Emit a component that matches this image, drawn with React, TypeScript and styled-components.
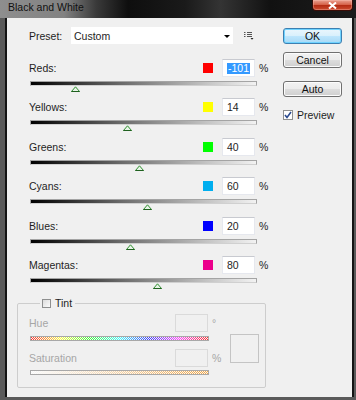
import styled, { createGlobalStyle } from 'styled-components'

const GlobalStyle = createGlobalStyle`
  html, body {
    margin: 0;
    padding: 0;
    background: #000;
  }
  body {
    font-family: "Liberation Sans", Arial, sans-serif;
    font-size: 10.5px;
    color: #1e1e1e;
  }
`

type Channel = {
  name: string
  color: string
  value: number
  selected?: boolean
}

const channels: Channel[] = [
  { name: 'Reds', color: '#ff0000', value: -101, selected: true },
  { name: 'Yellows', color: '#ffff00', value: 14 },
  { name: 'Greens', color: '#00ff00', value: 40 },
  { name: 'Cyans', color: '#00aeef', value: 60 },
  { name: 'Blues', color: '#0000ff', value: 20 },
  { name: 'Magentas', color: '#ec008c', value: 80 },
]

// photoshop sliders run from -200 to 300
const toPercent = (v: number) => ((v + 200) / 500) * 100

const ThumbIcon = () => (
  <svg width="9" height="6" viewBox="0 0 9 6">
    <path d="M0.5 5.5 L4.5 0.8 L8.5 5.5 Z" fill="#e8f4e8" stroke="#2f8f2f" strokeWidth="1" />
    <path d="M0.5 5.5 H8.5" stroke="#1f5f1f" strokeWidth="1" />
  </svg>
)

const App = () => {
  return (
    <>
      <GlobalStyle />
      <Window>
        <TitleBar>
          <Title>Black and White</Title>
          <CloseButton>
            <svg width="9" height="7" viewBox="0 0 9 7">
              <path d="M1 0.5 L8 6.5 M8 0.5 L1 6.5" stroke="#fff" strokeWidth="2" />
            </svg>
          </CloseButton>
        </TitleBar>
        <Body>
          <Main>
            <PresetRow>
              <PresetLabel>Preset:</PresetLabel>
              <Select>
                <span>Custom</span>
                <Caret />
              </Select>
              <MenuIcon width="10" height="9" viewBox="0 0 10 9">
                <path d="M0 1.5 H1.5 M3 1.5 H8 M0 3.5 H1.5 M3 3.5 H8 M0 5.5 H1.5 M3 5.5 H8" stroke="#555" strokeWidth="1" />
                <path d="M6.5 7 L9.5 7 L8 8.8 Z" fill="#222" />
              </MenuIcon>
            </PresetRow>

            <ChannelList>
              {channels.map((ch) => (
                <ChannelRow key={ch.name}>
                  <ChannelHeader>
                    <ChannelLabel>{ch.name}:</ChannelLabel>
                    <Swatch $color={ch.color} />
                    <ValueBox>
                      {ch.selected ? <Selected>{ch.value}</Selected> : ch.value}
                    </ValueBox>
                    <Unit>%</Unit>
                  </ChannelHeader>
                  <Track>
                    <Thumb style={{ left: `calc(${toPercent(ch.value)}% - 4.5px)` }}>
                      <ThumbIcon />
                    </Thumb>
                  </Track>
                </ChannelRow>
              ))}
            </ChannelList>

            <TintGroup>
              <TintLegend>
                <SmallCheck />
                <span>Tint</span>
              </TintLegend>
              <TintBody>
                <TintControls>
                  <TintRow>
                    <TintHeader>
                      <DisabledLabel>Hue</DisabledLabel>
                      <DisabledBox />
                      <DisabledUnit>°</DisabledUnit>
                    </TintHeader>
                    <TintBar $kind="hue" />
                  </TintRow>
                  <TintRow $gap={8}>
                    <TintHeader>
                      <DisabledLabel>Saturation</DisabledLabel>
                      <DisabledBox />
                      <DisabledUnit>%</DisabledUnit>
                    </TintHeader>
                    <TintBar $kind="sat" />
                  </TintRow>
                </TintControls>
                <TintSwatch />
              </TintBody>
            </TintGroup>
          </Main>

          <Side>
            <DialogButton $primary $top={1}>OK</DialogButton>
            <DialogButton $top={8}>Cancel</DialogButton>
            <DialogButton $top={13}>Auto</DialogButton>
            <PreviewRow>
              <CheckBox>
                <svg width="8" height="8" viewBox="0 0 8 8">
                  <path d="M1 4 L3 6.5 L7 1" fill="none" stroke="#2b4a8f" strokeWidth="1.6" />
                </svg>
              </CheckBox>
              <span>Preview</span>
            </PreviewRow>
          </Side>
        </Body>
      </Window>
    </>
  )
}

export default App

const Window = styled.div`
  width: 356px;
  height: 400px;
  display: flex;
  flex-direction: column;
  background: #5a5a5a;
  overflow: hidden;
`

const TitleBar = styled.div`
  height: 18px;
  flex-shrink: 0;
  display: flex;
  justify-content: space-between;
  align-items: flex-start;
  padding-left: 8px;
  background: linear-gradient(
    90deg,
    #8e8e8e 0%,
    #828282 18%,
    #3a3a3a 27%,
    #0e0e0e 36%,
    #1a1a1a 52%,
    #343434 62%,
    #111 76%,
    #1c1c1c 100%
  );
`

const Title = styled.div`
  padding-top: 1px;
  line-height: 13px;
  font-size: 10.5px;
  color: #111;
`

const CloseButton = styled.div`
  width: 41px;
  height: 11px;
  margin-right: 3px;
  box-sizing: border-box;
  border: 1px solid #3a0c06;
  border-top: none;
  border-radius: 0 0 4px 4px;
  background: linear-gradient(#eaa292 0%, #d6644c 45%, #b42c14 55%, #cc4c30 100%);
  box-shadow: inset 0 0 0 1px rgba(255, 200, 190, 0.35);
  display: flex;
  align-items: center;
  justify-content: center;
`

const Body = styled.div`
  flex: 1;
  display: flex;
  margin: 0 4px 3px 7px;
  padding: 9px 10px 0 10px;
  background: #f0f0f0;
  box-shadow: -2px 0 0 #141414, 2px 0 0 #141414;
`

const Main = styled.div`
  width: 251px;
  display: flex;
  flex-direction: column;
`

const PresetRow = styled.div`
  display: flex;
  align-items: center;
  height: 17px;
  padding-left: 12px;
`

const PresetLabel = styled.span`
  width: 42px;
`

const Select = styled.div`
  width: 162px;
  height: 17px;
  box-sizing: border-box;
  padding: 0 3px;
  background: #fff;
  display: flex;
  align-items: center;
  justify-content: space-between;
`

const Caret = styled.span`
  width: 0;
  height: 0;
  border-left: 3px solid transparent;
  border-right: 3px solid transparent;
  border-top: 3px solid #000;
  margin-top: 1px;
`

const MenuIcon = styled.svg`
  margin-left: 11px;
`

const ChannelList = styled.div`
  margin-top: 15px;
  display: flex;
  flex-direction: column;
`

const ChannelRow = styled.div`
  height: 39.4px;
  padding-left: 12px;
  display: flex;
  flex-direction: column;
`

const ChannelHeader = styled.div`
  display: flex;
  align-items: center;
  height: 18px;
`

const ChannelLabel = styled.span`
  flex: 1;
`

const Swatch = styled.span<{ $color: string }>`
  width: 10px;
  height: 10px;
  margin-right: 9px;
  background: ${(p) => p.$color};
`

const ValueBox = styled.div`
  width: 33px;
  height: 18px;
  box-sizing: border-box;
  padding-left: 4px;
  border: 1px solid #e6e8ee;
  border-top-color: #c8cad0;
  background: #fff;
  display: flex;
  align-items: center;
`

const Selected = styled.span`
  background: #3399ff;
  color: #fff;
  padding: 0 1px;
  line-height: 11px;
`

const Unit = styled.span`
  margin-left: 4px;
  width: 9px;
`

const Track = styled.div`
  position: relative;
  margin-top: 4px;
  margin-left: 1px;
  width: 227px;
  height: 5px;
  box-sizing: border-box;
  border: 1px solid #a4a4a4;
  border-bottom-color: #d0d0d0;
  background: linear-gradient(to right, #000 0%, #6a6a6a 40%, #c8c8c8 80%, #f2f2f2 100%);
`

const Thumb = styled.div`
  position: absolute;
  top: 4px;
  width: 9px;
  height: 6px;
  display: flex;
`

const TintGroup = styled.fieldset`
  margin: 2px 0 0 0;
  padding: 5px 0 12px 11px;
  width: 249px;
  box-sizing: border-box;
  border: 1px solid #cdcdcd;
  border-radius: 2px;
  min-width: 0;
`

const TintLegend = styled.legend`
  margin-left: 11px;
  padding: 0 3px 0 2px;
  height: 12px;
  line-height: 12px;
  display: flex;
  align-items: center;
  gap: 4px;
  font-size: 10.5px;
`

const SmallCheck = styled.span`
  width: 9px;
  height: 9px;
  box-sizing: border-box;
  border: 1px solid #8e8f8f;
  background: linear-gradient(135deg, #dcdcdc, #fbfbfb);
`

const TintBody = styled.div`
  display: flex;
  align-items: flex-start;
`

const TintControls = styled.div`
  width: 193px;
  display: flex;
  flex-direction: column;
`

const TintRow = styled.div<{ $gap?: number }>`
  display: flex;
  flex-direction: column;
  margin-top: ${(p) => p.$gap ?? 0}px;
`

const TintHeader = styled.div`
  display: flex;
  align-items: center;
  height: 18px;
`

const DisabledLabel = styled.span`
  flex: 1;
  color: #a6a6a6;
`

const DisabledBox = styled.div`
  width: 33px;
  height: 18px;
  box-sizing: border-box;
  border: 1px solid #dadada;
  background: #f0f0f0;
`

const DisabledUnit = styled.span`
  width: 14px;
  padding-left: 4px;
  box-sizing: border-box;
  color: #a6a6a6;
`

const TintBar = styled.div<{ $kind: 'hue' | 'sat' }>`
  margin-top: ${(p) => (p.$kind === 'hue' ? 4 : 3)}px;
  margin-left: 1px;
  width: 179px;
  height: 5px;
  box-sizing: border-box;
  border: 1px solid #a8a8a8;
  background:
    repeating-conic-gradient(#f6f6f6 0 25%, transparent 0 50%) 0 0 / 2px 2px,
    ${(p) =>
      p.$kind === 'hue'
        ? 'linear-gradient(to right, #ff3030, #ffff40, #40ff40, #40ffff, #4040ff, #ff40ff, #ff3030)'
        : 'linear-gradient(to right, #ffffff, #f5a640)'};
`

const TintSwatch = styled.div`
  margin-top: 20px;
  margin-left: 8px;
  width: 29px;
  height: 29px;
  box-sizing: border-box;
  border: 1px solid #c4c4c4;
  background: #f0f0f0;
`

const Side = styled.div`
  margin-left: 15px;
  width: 59px;
  display: flex;
  flex-direction: column;
`

const DialogButton = styled.button<{ $primary?: boolean; $top: number }>`
  margin-top: ${(p) => p.$top}px;
  height: 16px;
  padding: 0;
  box-sizing: border-box;
  font-family: "Liberation Sans", Arial, sans-serif;
  font-size: 10.5px;
  line-height: 14px;
  color: #111;
  border-radius: 3px;
  border: 1px solid ${(p) => (p.$primary ? '#3c7fb1' : '#707070')};
  background: ${(p) =>
    p.$primary
      ? 'linear-gradient(#eaf6fd 0%, #d9f0fc 50%, #bee6fd 51%, #a7d9f5 100%)'
      : 'linear-gradient(#f2f2f2 0%, #ebebeb 50%, #dddddd 51%, #cfcfcf 100%)'};
  box-shadow: inset 0 0 0 1px ${(p) => (p.$primary ? '#6fd3ff' : '#fcfcfc')};
`

const PreviewRow = styled.div`
  margin-top: 12px;
  display: flex;
  align-items: center;
  gap: 4px;
`

const CheckBox = styled.span`
  width: 10px;
  height: 10px;
  box-sizing: border-box;
  border: 1px solid #8e8f8f;
  background: #fff;
  display: flex;
  align-items: center;
  justify-content: center;
`
